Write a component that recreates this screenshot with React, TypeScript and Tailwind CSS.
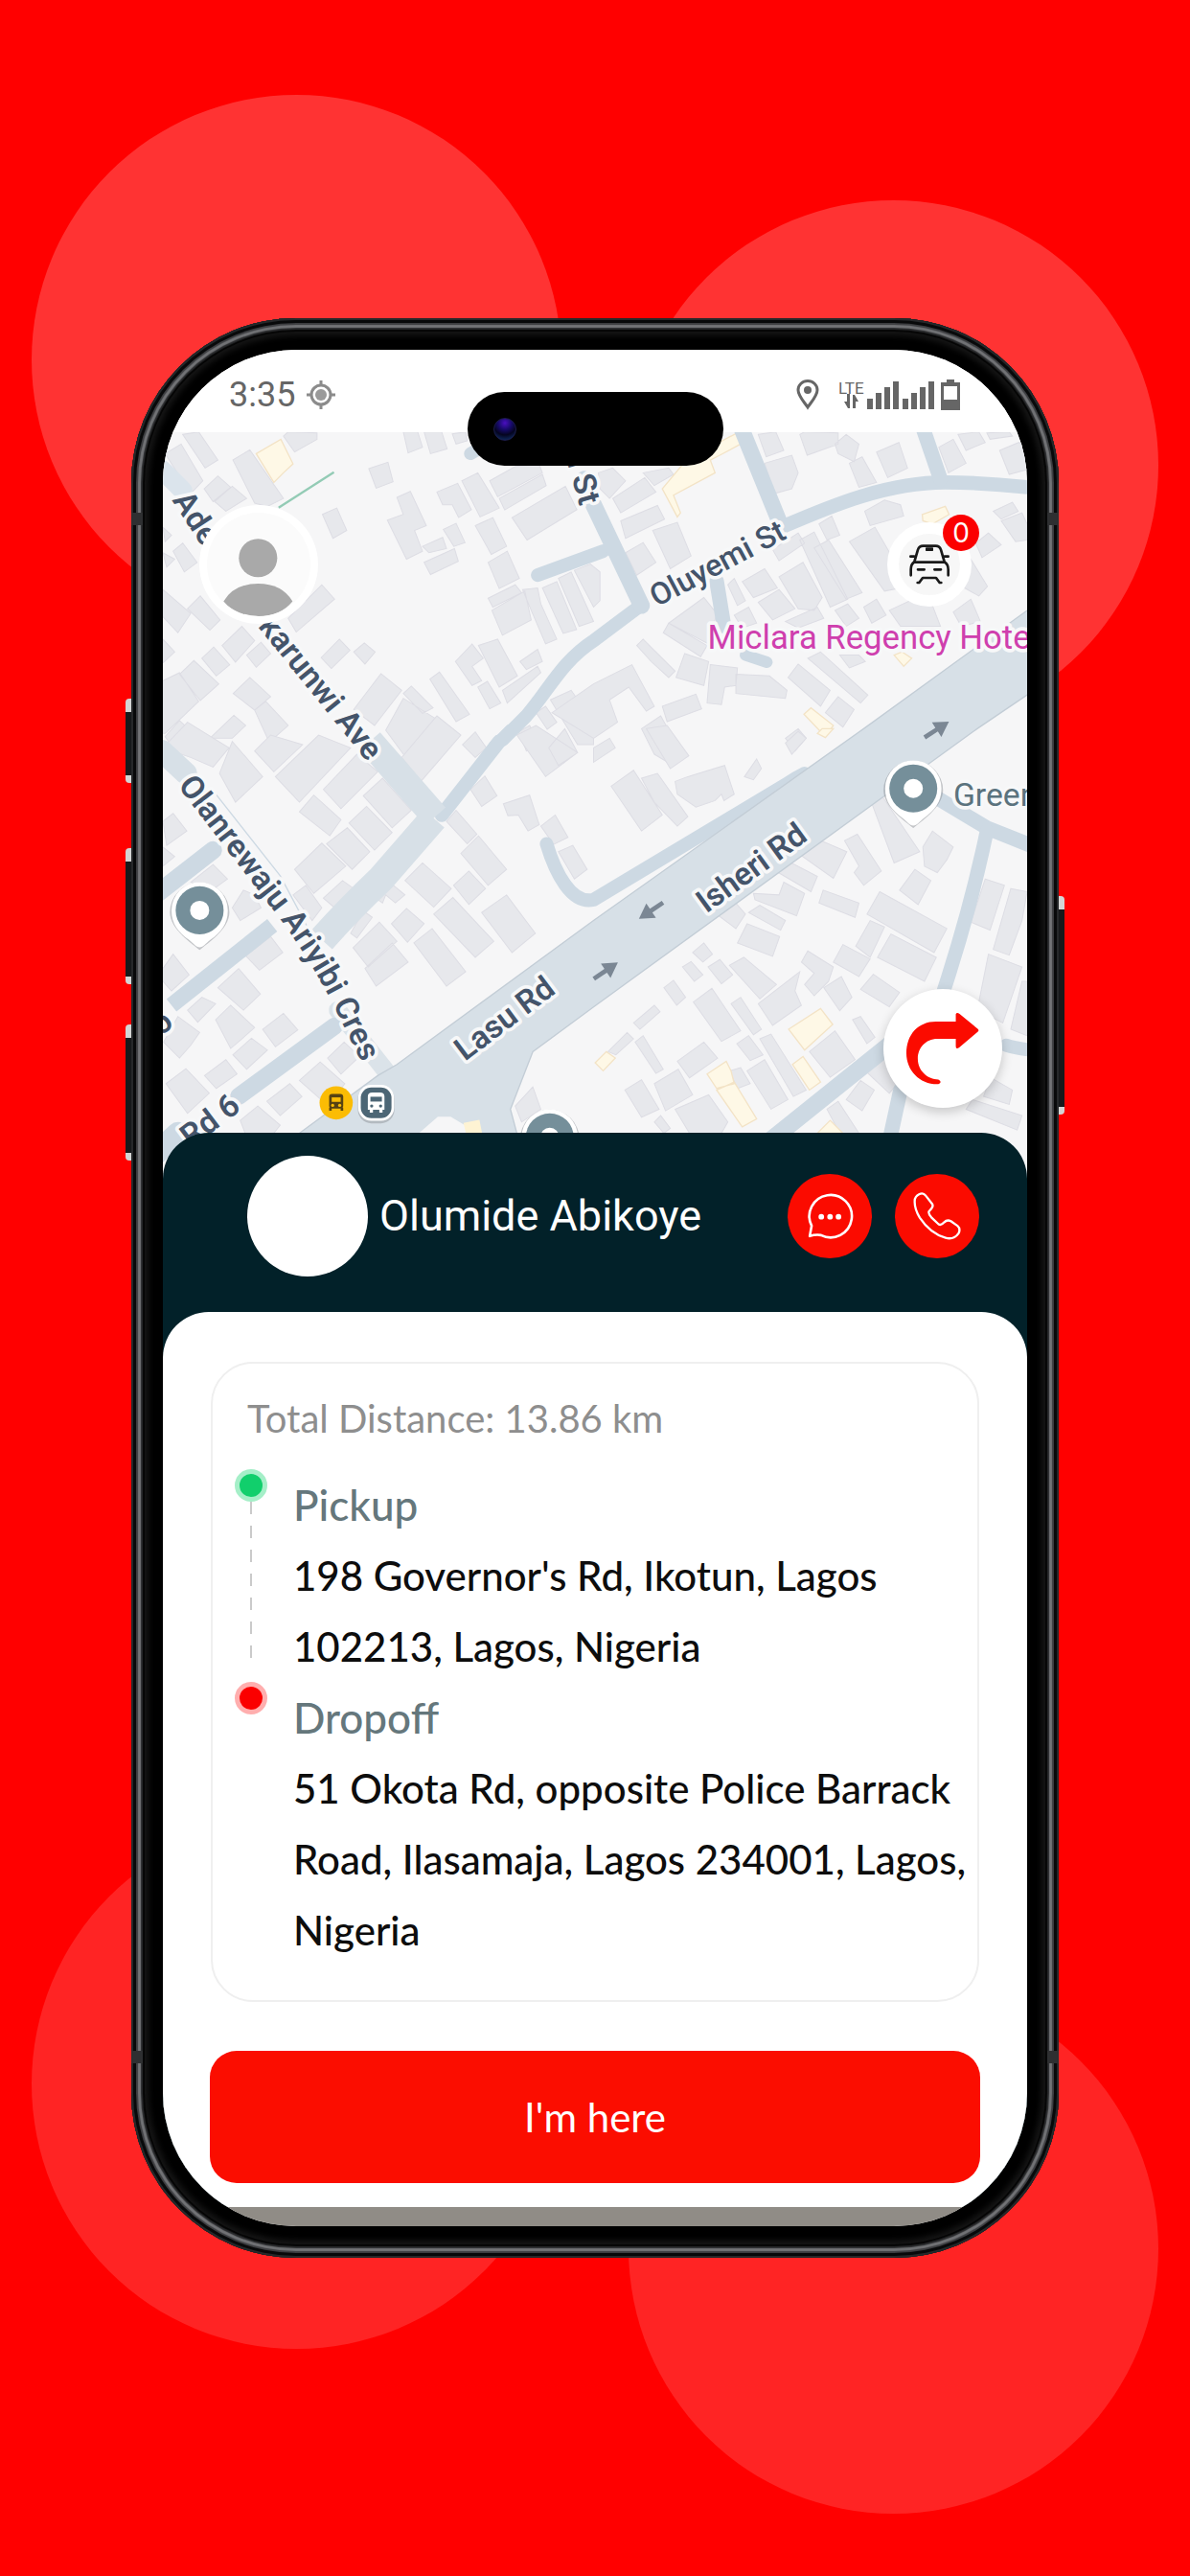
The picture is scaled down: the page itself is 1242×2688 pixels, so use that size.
import React from "react";
import clsx from "clsx";

// Each map quadrant keeps its own local grid, shifted into the shared 2703 x 2340 canvas.
const quadrants = [
  {
    id: "north-west",
    transform: "translate(-153 -393)",
    buildings:
      "M160 460L210 430L278 545L240 585ZM215 400L265 392L325 480L285 505ZM372 480L425 448L530 600L480 625L440 615ZM530 405L545 392L635 395L635 415L565 455ZM905 392L950 392L965 440L920 458ZM970 392L1025 392L1042 445L990 460ZM1058 398L1100 392L1105 420L1070 430ZM797 507L857 487L873 548L820 568ZM282 570L325 530L365 565L310 610ZM315 610L370 562L415 600L350 640ZM652 650L697 630L728 700L685 725ZM885 597L927 578L977 685L940 700L965 765L915 790L855 668L905 650ZM965 750L1028 722L1040 757L985 770ZM970 800L1065 757L1077 797L990 838ZM1030 697L1070 678L1098 738L1063 750ZM1010 580L1075 553L1118 635L1078 660L1058 620L1028 620ZM1088 545L1138 520L1205 630L1145 658ZM1175 545L1255 500L1330 495L1340 520L1200 595ZM1205 600L1340 525L1352 560L1222 636ZM1245 660L1412 562L1448 635L1292 730ZM1130 685L1185 660L1228 750L1180 775ZM1170 800L1230 765L1268 850L1205 882ZM1170 912L1255 870L1275 895L1185 940ZM1182 950L1285 890L1305 980L1215 1028ZM1278 885L1325 880L1335 930L1385 1040L1350 1055L1305 950ZM1340 880L1385 860L1447 1010L1405 1022ZM1390 850L1430 830L1500 985L1455 1000ZM1440 825L1490 805L1520 830L1520 920L1500 940ZM1068 1110L1120 1055L1155 1100L1120 1125L1150 1170L1120 1185ZM1140 1060L1200 1040L1262 1155L1205 1190ZM1270 1110L1325 1072L1340 1110L1290 1135ZM1215 1200L1325 1125L1335 1145L1230 1240ZM1138 1190L1168 1172L1210 1240L1175 1258ZM988 1165L1018 1143L1112 1275L1070 1298ZM750 1260L835 1148L900 1200L815 1310ZM905 1210L930 1187L998 1255L965 1272ZM850 1325L905 1225L1000 1285L1070 1330L1010 1400L920 1420ZM648 1098L705 1040L738 1075L680 1132ZM750 1080L783 1052L817 1080L785 1118ZM545 975L650 870L690 915L570 1018ZM415 1090L460 1050L490 1085L445 1128ZM338 1060L400 1000L440 1045L380 1112ZM275 1100L312 1065L362 1120L320 1155ZM205 1150L250 1107L328 1180L270 1232ZM153 1170L205 1145L265 1235L160 1335L153 1335ZM373 1210L425 1160L490 1220L440 1262ZM440 1262L475 1235L545 1310L500 1350L480 1350ZM153 885L240 960L200 1020L153 970ZM230 945L270 905L332 980L300 1012ZM185 765L215 740L260 800L220 830ZM153 690L180 715L160 735ZM153 770L190 790L165 815ZM153 1040L190 1080L153 1115ZM300 1350L375 1278L412 1310L370 1350ZM160 1345L205 1295L265 1350L200 1400ZM1365 1230L1430 1200L1500 1300L1500 1370L1450 1370ZM1265 1330L1300 1310L1335 1370L1290 1390ZM1320 1270L1350 1250L1385 1300L1355 1322Z",
    accents: "M445 460L522 415L560 492L530 520L500 550Z",
  },
  {
    id: "north-east",
    transform: "translate(1347 -393)",
    buildings:
      "M15 520L60 505L100 545L50 600L20 570ZM60 600L160 535L195 580L85 645ZM85 670L200 622L222 665L100 725ZM155 520L235 505L250 525L190 560ZM100 770L155 738L195 800L135 840ZM185 700L262 675L305 780L240 820ZM515 400L570 392L595 450L540 470ZM645 400L660 392L765 395L765 430L668 465ZM535 490L620 465L640 520L620 570L565 585ZM755 430L790 400L830 430L815 485L765 460ZM800 490L840 470L885 550L830 565ZM885 455L955 425L982 505L920 535ZM1080 440L1125 415L1165 490L1110 520ZM1140 400L1205 392L1225 425L1165 450ZM1270 450L1330 425L1356 440L1356 510L1300 525ZM1230 395L1300 392L1310 405L1240 415ZM848 640L910 605L960 620L970 655L865 685ZM705 680L745 655L770 715L730 730ZM1250 640L1310 612L1328 640L1275 665ZM1275 670L1340 645L1356 680L1356 730L1320 735ZM1195 740L1235 708L1275 745L1215 785ZM560 760L640 708L660 740L580 795ZM645 730L690 705L795 915L740 940ZM690 755L735 730L840 895L790 915ZM800 735L880 690L955 820L960 880L910 890ZM580 845L655 800L715 910L690 950L640 945ZM465 860L535 820L575 880L500 910ZM515 925L580 885L630 945L560 980ZM420 870L440 850L475 920L450 935ZM440 965L485 940L510 990L465 1005ZM600 985L700 940L720 975L640 1005ZM755 950L795 930L830 975L790 1000ZM845 940L885 915L915 965L870 990ZM925 950L990 920L1060 935L1085 1000L960 1000ZM1125 955L1180 915L1210 985L1150 1000ZM1180 790L1232 875L1205 905L1160 880ZM235 990L345 910L385 960L360 1055ZM218 1020L235 990L355 1060L335 1095ZM135 1060L155 1040L255 1140L235 1160L180 1110ZM285 1085L360 1110L345 1185L258 1160ZM365 1120L450 1130L445 1185L410 1190L400 1245L355 1240ZM445 1150L550 1155L605 1200L600 1225L445 1210ZM0 1180L120 1120L190 1250L165 1265L110 1190L50 1230L75 1300L0 1350L-130 1270ZM215 1250L320 1212L338 1258L230 1298ZM150 1320L210 1280L260 1370L240 1430L190 1400ZM608 1160L640 1118L740 1200L710 1250ZM670 1100L710 1080L858 1215L835 1240ZM725 1270L765 1220L815 1260L780 1315ZM770 1090L830 1090L850 1110L800 1130ZM600 1350L640 1320L665 1350L630 1390Z",
    accents:
      "M290 480L455 392L460 430L395 465L365 480L380 520L250 590L272 645L262 658L215 570ZM1028 650L1100 625L1112 650L1060 680L1030 670ZM940 1090L965 1080L995 1100L970 1125ZM658 1275L680 1255L750 1310L725 1345Z",
  },
  {
    id: "south-west",
    transform: "translate(-153 927)",
    buildings:
      "M505 150L640 20L740 60L580 230ZM655 190L760 80L825 135L710 250ZM780 210L840 155L930 255L870 310ZM580 260L625 208L710 285L675 335ZM735 295L790 243L870 325L815 380ZM665 360L730 310L800 385L745 440ZM565 440L650 358L725 430L625 515ZM330 140L370 40L465 150L380 230ZM153 60L230 -20L360 60L310 120L240 90ZM440 70L490 20L590 50L500 135ZM1115 190L1160 148L1198 210L1150 243ZM1218 235L1300 208L1330 300L1295 320L1265 270L1232 272ZM1335 305L1380 270L1420 340L1375 362ZM1390 385L1435 365L1480 440L1440 470ZM1040 290L1070 255L1135 330L1105 360ZM1085 390L1140 335L1228 440L1170 490ZM1260 20L1320 -10L1450 75L1350 150ZM1360 60L1410 0L1450 75L1390 115ZM910 475L965 420L1055 500L1000 558ZM1062 490L1110 445L1162 500L1110 550ZM1150 575L1228 520L1318 640L1245 700ZM1000 580L1060 528L1188 665L1130 715ZM868 610L915 562L970 610L918 668ZM938 670L995 625L1100 760L1040 805ZM748 685L830 605L885 665L795 745ZM785 750L870 670L920 730L820 805ZM740 640L780 570L808 590L760 655ZM655 530L715 475L750 500L690 560ZM560 520L600 490L650 560L620 600ZM805 520L850 470L910 520L880 545L850 520L840 545ZM370 560L405 505L440 520L460 560L395 600ZM412 710L490 650L528 700L455 755ZM325 810L390 750L458 830L405 880ZM153 750L185 705L235 770L180 820L153 790ZM153 290L185 265L228 320L165 365ZM153 370L190 400L153 430ZM230 880L275 840L318 860L262 918ZM318 910L365 865L440 935L400 970L365 1000ZM465 940L530 890L575 942L505 995ZM372 1020L430 968L480 1005L415 1065ZM155 980L200 900L268 950L240 990L205 1030ZM283 1085L350 1035L385 1080L320 1125ZM163 1110L225 1063L298 1140L230 1203ZM478 1165L550 1110L588 1150L520 1210ZM580 1100L645 1042L722 1110L670 1180ZM668 1030L720 980L768 1025L710 1080ZM395 1225L450 1180L520 1240L480 1290L420 1290ZM1255 1180L1310 1120L1335 1190L1275 1230ZM240 480L310 425L355 470L300 510ZM900 90L1010 -40L1085 20L960 165ZM1090 50L1130 10L1165 60L1130 90Z",
    accents: "",
  },
  {
    id: "south-east",
    transform: "translate(1347 927)",
    buildings:
      "M55 180L125 130L215 270L150 320ZM150 155L200 140L295 275L262 305L190 230ZM255 165L295 150L410 115L440 205L408 225L400 205L380 225L320 245L262 205ZM472 150L510 95L525 125L500 160ZM0 60L50 30L68 60L0 105ZM165 0L230 -10L298 85L240 125ZM600 45L640 8L665 30L620 80ZM865 220L905 215L1020 385L940 420ZM640 390L700 345L792 385L750 468ZM578 450L610 415L700 462L680 510ZM785 350L825 330L900 445L845 490L815 450L830 430ZM500 515L580 520L595 480L660 515L635 585L505 535ZM485 575L520 552L600 600L585 630ZM385 580L440 540L475 580L445 625ZM450 670L480 610L582 650L560 712ZM705 545L718 505L830 545L818 590ZM957 505L1005 440L1055 475L1015 550ZM1030 370L1060 320L1125 370L1105 410L1075 450L1035 430ZM855 580L895 510L1105 625L1065 700ZM820 680L865 600L910 620L865 715ZM888 715L930 642L1072 715L1035 790ZM750 730L780 675L865 720L830 775ZM310 700L345 670L372 705L342 730ZM278 745L305 728L342 770L315 790ZM358 745L395 722L435 770L400 798ZM425 740L470 715L572 800L520 845ZM650 730L670 695L750 745L735 790L690 835L660 800L690 765ZM720 810L775 775L808 840L770 882ZM835 815L875 768L957 825L925 870ZM220 810L250 787L288 840L260 865ZM312 855L370 812L460 945L400 978ZM430 860L460 840L525 940L500 957ZM515 860L645 760L630 820L650 865L560 928ZM125 920L190 865L208 885L145 940ZM45 1010L105 950L125 970L70 1020ZM130 980L155 960L218 1065L195 1078ZM262 1040L345 980L388 1030L300 1092ZM448 985L485 960L530 1020L490 1038ZM520 970L555 955L665 1130L625 1150ZM480 1070L535 1035L608 1160L555 1190ZM675 1010L755 945L818 1035L740 1090ZM810 910L835 900L880 965L855 985ZM98 1130L150 1098L205 1190L150 1215ZM190 1110L265 1065L310 1145L225 1195ZM255 1190L360 1145L420 1230L400 1265L300 1265ZM425 1070L460 1060L490 1110L450 1125ZM790 1160L835 1100L878 1130L840 1195ZM730 1190L765 1165L830 1265L770 1265ZM850 1070L900 1010L950 1110L925 1140ZM1225 470L1285 490L1240 630L1180 605ZM1305 500L1356 510L1340 600L1300 708L1250 690ZM1235 705L1340 745L1280 920L1200 880ZM1340 790L1356 790L1356 960L1305 940ZM1240 1090L1310 1130L1300 1175L1220 1150ZM1165 1190L1185 1160L1340 1210L1325 1255ZM190 1230L210 1210L240 1250L220 1265Z",
    accents:
      "M610 940L710 875L748 925L660 1005ZM622 1050L655 1025L710 1105L675 1130ZM355 1080L415 1040L430 1070L440 1110L385 1125ZM385 1130L440 1105L510 1220L465 1245ZM5 1045L40 1010L68 1030L30 1070ZM700 1265L740 1225L780 1265ZM700 15L715 0L750 0L725 28Z",
  },
];

const haloText = "[paint-order:stroke] stroke-[#f7f8f9] stroke-[22px] [stroke-linejoin:round]";
const streetLabel = "fill-[#44546a] font-semibold text-[100px]";

const MapPin = ({ x, y }: { x: number; y: number }) => (
  <g transform={`translate(${x} ${y})`}>
    <path d="M0 124C-20 106 -93 60 -93 6A93 93 0 1 1 93 6C93 60 20 106 0 124Z" fill="#8f9499" opacity="0.5" />
    <path d="M0 116C-12 116 -18 104 -34 92C-66 68 -88 44 -88 0A88 88 0 1 1 88 0C88 44 66 68 34 92C18 104 12 116 0 116Z" fill="#fff" />
    <circle r="75" fill="#758f9a" />
    <circle r="30" fill="#fff" />
  </g>
);

const LaneArrow = ({ x, y, angle }: { x: number; y: number; angle: number }) => (
  <path
    transform={`translate(${x} ${y}) rotate(${angle})`}
    d="M-45 -7H0V-27L46 0L0 27V7H-45Z"
    fill="#7b8794"
  />
);

const StreetMap = () => (
  <svg
    viewBox="0 0 2703 2340"
    preserveAspectRatio="xMidYMin slice"
    className="block h-[780px] w-full bg-[#f6f6f7]"
    role="img"
    aria-label="Map around Isheri Rd and Lasu Rd"
  >
    <g stroke="#dddde4" strokeWidth="3" fill="#e7e8ec">
      {quadrants.map((q) => (
        <path key={q.id} d={q.buildings} transform={q.transform} />
      ))}
    </g>
    <g stroke="#f3e3c6" strokeWidth="4" fill="#fef8e6">
      {quadrants.map((q) => (
        <path key={q.id} d={q.accents} transform={q.transform} />
      ))}
    </g>

    {/* side streets */}
    <g fill="none" stroke="#cdd9e3" strokeLinejoin="round" strokeLinecap="round">
      <g transform="translate(-153 -393)">
        <path d="M1325 840L1530 765" strokeWidth="42" />
        <path d="M1115 460L1150 440" strokeWidth="40" />
        <path d="M150 510L215 575" strokeWidth="60" stroke="#dbe4ec" />
        <path d="M1640 940L1500 1045C1400 1110 1360 1200 1290 1280L1215 1355" strokeWidth="42" />
      </g>
      <g transform="translate(1347 -393)">
        <path d="M-30 540L0 620L150 935" strokeWidth="52" />
        <path d="M462 380L588 690" strokeWidth="50" />
        <path d="M588 690C750 620 920 550 1100 550Q1230 550 1380 568" strokeWidth="44" />
        <path d="M1030 380L1085 540" strokeWidth="46" />
        <path d="M385 860L408 1000" strokeWidth="46" />
        <path d="M475 1090L542 1112" strokeWidth="36" />
      </g>
      <g transform="translate(-153 927)">
        <path d="M1235 0L1185 50" strokeWidth="24" />
        <path d="M1205 40L1025 270" strokeWidth="44" />
        <path d="M800 40L1005 275" strokeWidth="86" stroke="#d7e0e7" strokeLinecap="butt" />
        <path d="M1000 280L835 470Q740 560 650 660" strokeWidth="88" stroke="#d7e0e7" strokeLinecap="butt" />
        <path d="M150 70L225 140" strokeWidth="70" stroke="#d7e0e7" />
        <path d="M315 200L520 460L690 780" strokeWidth="4" />
        <path d="M700 880L850 1070" strokeWidth="56" stroke="#dbe3e9" />
        <path d="M310 380L130 520" strokeWidth="56" />
        <path d="M495 615L180 865" strokeWidth="50" strokeLinecap="butt" />
        <path d="M690 930L390 1150" strokeWidth="54" />
        <path d="M200 1265L130 1330" strokeWidth="70" />
        <path d="M1353 360C1380 450 1430 550 1500 535L2100 175Q2130 155 2160 140" strokeWidth="42" />
      </g>
      <g transform="translate(1347 927)">
        <path d="M1080 220L1230 310L1380 370" strokeWidth="46" />
        <path d="M1230 320Q1180 560 1095 820" strokeWidth="44" />
        <path d="M960 1130L925 1290" strokeWidth="46" />
        <path d="M930 985L550 1290" strokeWidth="54" />
        <path d="M1290 990Q1320 1000 1370 1005" strokeWidth="42" />
      </g>
    </g>

    {/* Isheri Rd / Lasu Rd carriageway */}
    <path
      d="M2720 545L2192 927L1347 1527L732 1977L672 2012L427 2192L250 2340H1200L1107 2192L1087 2117L1157 1937L1347 1797L2547 927L2720 810Z"
      fill="#d7e0e7"
      stroke="#c3cdd6"
      strokeWidth="4"
    />
    <path d="M780 2210L860 2140L900 2140L1000 2200L960 2260H780Z" fill="#f6f6f7" />
    <path d="M940 2160L990 2150L1000 2200L950 2200Z" fill="#fef3d3" />
    <path d="M362 236L535 125" stroke="#93cbb5" strokeWidth="7" />

    <LaneArrow x={2420} y={930} angle={-33} />
    <LaneArrow x={1527} y={1496} angle={146} />
    <LaneArrow x={1385} y={1684} angle={-34} />

    <g className={`font-['Roboto',sans-serif] ${haloText}`}>
      <text className={streetLabel} transform="translate(28 212) rotate(57)">Ade</text>
      <text className={streetLabel} transform="translate(640 1032) rotate(51)" textAnchor="end">
        karunwi Ave
      </text>
      <text className={streetLabel} transform="translate(1304 232) rotate(74)" textAnchor="end">i St</text>
      <text className="fill-[#44546a] text-[96px] font-medium" transform="translate(1545 548) rotate(-28)">Oluyemi St</text>
      <text className={streetLabel} transform="translate(1700 1506) rotate(-36)">Isheri Rd</text>
      <text className={streetLabel} transform="translate(945 1968) rotate(-37)">Lasu Rd</text>
      <path id="crescent" d="M45 1105L350 1500Q470 1660 545 1815L670 2070" fill="none" stroke="none" />
      <text className={streetLabel}>
        <textPath href="#crescent">Olanrewaju Ariyibi Cres</textPath>
      </text>
      <text className={streetLabel} transform="translate(248 2118) rotate(-37)" textAnchor="end">Rd 6</text>
      <text className={streetLabel} transform="translate(38 1855) rotate(-37)" textAnchor="end">o</text>
      <text x="1704" y="678" className="fill-[#cf3fae] text-[104px]">Miclara Regency Hotel</text>
      <text x="2472" y="1168" className="fill-[#5b737e] text-[101px]">Green</text>
    </g>

    <MapPin x={115} y={1495} />
    <MapPin x={2347} y={1114} />
    <MapPin x={1210} y={2205} />

    <g transform="translate(542 2097)">
      <circle r="52" fill="#fbbc04" />
      <rect x="-22" y="-28" width="44" height="46" rx="9" fill="#564213" />
      <rect x="-14" y="-17" width="28" height="14" fill="#fbbc04" />
      <circle cx="-11" cy="8" r="5" fill="#fbbc04" />
      <circle cx="11" cy="8" r="5" fill="#fbbc04" />
      <path d="M-18 15v10M18 15v10" stroke="#564213" strokeWidth="8" />
    </g>
    <g transform="translate(667 2097)">
      <rect x="-57" y="-54" width="114" height="118" rx="42" fill="#8f9499" opacity="0.5" />
      <rect x="-56" y="-56" width="112" height="112" rx="40" fill="#fff" />
      <rect x="-48" y="-48" width="96" height="96" rx="33" fill="#4c6675" />
      <path d="M-26 -20Q-26 -32 -12 -32H12Q26 -32 26 -20V22H20V31H10V22H-10V31H-20V22H-26Z" fill="#fff" />
      <rect x="-18" y="-19" width="36" height="15" fill="#4c6675" />
      <circle cx="-14" cy="10" r="5" fill="#4c6675" />
      <circle cx="14" cy="10" r="5" fill="#4c6675" />
    </g>
  </svg>
);

const StatusBar = () => (
  <div className="flex h-[86px] items-center justify-between bg-white px-[69px] pt-2 text-[#666]">
    <div className="flex items-center gap-3">
      <span className="font-['Roboto',sans-serif] text-[36px] leading-10">3:35</span>
      <svg width="30" height="30" viewBox="0 0 30 30" fill="none" stroke="#8b8b8b" strokeWidth="3">
        <circle cx="15" cy="15" r="10" />
        <circle cx="15" cy="15" r="6" fill="#9a9a9a" stroke="none" />
        <path d="M15 0v5M15 25v5M0 15h5M25 15h5" />
      </svg>
    </div>
    <div className="flex items-center gap-5">
      <svg width="24" height="32" viewBox="0 0 24 32" fill="none" stroke="#666" strokeWidth="3">
        <path d="M12 29C8 23 2 17 2 11a10 9.5 0 0 1 20 0C22 17 16 23 12 29Z" />
        <circle cx="12" cy="11" r="4" fill="#666" stroke="none" />
      </svg>
      <svg width="128" height="32" viewBox="0 0 128 32" fill="#666">
        <text x="0" y="15" className="font-['Roboto',sans-serif] text-[17px]">LTE</text>
        <path d="M9 15h3v15h-2l-4 -7h3ZM15 30V16h2l4 7h-3v7Z" />
        <path d="M30 20h6v11h-6ZM39 14h6v17h-6ZM48 8h6v23h-6ZM57 2h6v29h-6Z" />
        <path d="M67 20h6v11h-6ZM76 14h6v17h-6ZM85 8h6v23h-6ZM94 2h6v29h-6Z" />
        <path d="M113 0h8v3h6v29h-20V3h6ZM110 7v14h14V7Z" fillRule="evenodd" />
      </svg>
    </div>
  </div>
);

const CarIcon = () => (
  <svg width="44" height="44" viewBox="984 742 132 132" fill="none" stroke="#1a1a1a" strokeWidth="8" strokeLinecap="round" strokeLinejoin="round">
    <path d="M1004 796L1014 762Q1018 750 1030 750H1070Q1082 750 1086 762L1096 796" />
    <path d="M1002 801H1098M991 783H1002M1098 783H1109" />
    <path d="M992 842V824Q992 808 1002 801M1109 842V824Q1109 808 1098 801" />
    <path d="M1014 824H1034M1066 824H1086" />
    <path d="M1013 865H1018L1029 850H1071L1082 865H1087" />
    <path d="M1040 757H1060V764H1040Z" strokeWidth="4" fill="#1a1a1a" />
  </svg>
);

const MapSection = () => (
  <section className="relative">
    <StreetMap />
    <div className="absolute inset-0 flex flex-col justify-between pb-[75px] pl-[38px] pr-[26px] pt-[76px]">
      <div className="flex items-center justify-between pr-8">
        <button aria-label="Profile" className="size-[124px] rounded-full bg-white p-2">
          <svg viewBox="24 24 318 318" className="size-full rounded-full bg-[#fbfbfb]" fill="#a9a9a9">
            <circle cx="181" cy="163" r="59" />
            <path d="M75 296Q108 242 181 242Q254 242 287 296Q250 342 181 342Q112 342 75 296Z" />
          </svg>
        </button>
        <button aria-label="Rides" className="relative flex size-[88px] items-center justify-center rounded-full border-[12px] border-white bg-[#f7f7f7]">
          <CarIcon />
          <span className="absolute -right-5 -top-5 flex size-[38px] items-center justify-center rounded-full bg-[#fb0000] font-['Inter',sans-serif] text-[28px] text-white">
            0
          </span>
        </button>
      </div>
      <button aria-label="Navigate" className="flex size-[124px] items-center justify-center self-end rounded-full bg-white shadow-[0_4px_12px_rgba(0,0,0,0.2)]">
        <svg width="78" height="78" viewBox="974 882 236 236" fill="#fb0b00">
          <path d="M1133 892Q1136 884 1145 891L1202 938Q1208 943 1202 948L1144 997Q1133 1004 1133 993V970H1075C1037 970 1013 1000 1013 1032C1013 1072 1045 1098 1078 1098Q1092 1106 1078 1113C1020 1115 977 1070 977 1015C977 955 1015 915 1070 915H1133Z" />
        </svg>
      </button>
    </div>
  </section>
);

const RiderHeader = () => (
  <div className="flex items-center pb-[37px] pl-[88px] pr-[50px] pt-6">
    <div className="size-[126px] shrink-0 rounded-full bg-white" />
    <p className="ml-3 flex-1 font-['Roboto',sans-serif] text-[45px] leading-[60px] text-white">Olumide Abikoye</p>
    <div className="flex gap-6">
      <button aria-label="Message" className="size-[88px] rounded-full bg-[#fb0b00]">
        <svg viewBox="30 28 270 270" fill="none" stroke="#fff" strokeWidth="8" strokeLinejoin="round">
          <path d="M101 227L107 194A68 68 0 1 1 137 224Q120 221 101 227Z" />
          <g fill="#fff" stroke="none">
            <circle cx="138" cy="165" r="9" />
            <circle cx="166" cy="165" r="9" />
            <circle cx="193" cy="165" r="9" />
          </g>
        </svg>
      </button>
      <button aria-label="Call" className="size-[88px] rounded-full bg-[#fb0b00]">
        <svg viewBox="368 28 268 268" fill="none" stroke="#fff" strokeWidth="7" strokeLinejoin="round">
          <path d="M431 115Q430 100 446 92Q458 86 466 97L487 124Q492 133 477 146Q472 152 484 166L507 188Q515 193 524 182Q534 172 546 178L567 193Q578 203 570 217Q555 238 529 231Q480 217 447 167Q430 138 431 115Z" />
        </svg>
      </button>
    </div>
  </div>
);

const stops = [
  {
    id: "pickup",
    label: "Pickup",
    lines: ["198 Governor's Rd, Ikotun, Lagos", "102213, Lagos, Nigeria"],
    dot: "bg-[#11cf6c] border-[#a5efc8]",
  },
  {
    id: "dropoff",
    label: "Dropoff",
    lines: ["51 Okota Rd, opposite Police Barrack", "Road, Ilasamaja, Lagos 234001, Lagos,", "Nigeria"],
    dot: "bg-[#fb0000] border-[#ffaeae]",
  },
];

const TripCard = () => (
  <div className="mx-[50px] mt-[51px] rounded-[44px] border-2 border-[#efefef] pb-9 pt-5">
    <p className="mb-4 pl-9 text-[40px] leading-[74px] text-[#8e8e8e]">Total Distance: 13.86 km</p>
    {stops.map((stop, i) => (
      <div key={stop.id} className="flex gap-7 pl-6">
        <div className="flex w-8 shrink-0 flex-col items-center pb-5">
          <div className={clsx("size-[34px] shrink-0 rounded-full border-[5px]", stop.dot)} />
          {i < stops.length - 1 && (
            <div className="w-0.5 flex-1 bg-[repeating-linear-gradient(to_bottom,#cacaca_0_13px,transparent_13px_25px)]" />
          )}
        </div>
        <div className="whitespace-nowrap">
          <h2 className="text-[44px] font-medium leading-[74px] text-[#65777c]">{stop.label}</h2>
          {stop.lines.map((line) => (
            <p key={line} className="text-[42px] font-medium leading-[74px] text-[#0d0d0d]">{line}</p>
          ))}
        </div>
      </div>
    ))}
  </div>
);

const SideKey = ({ className }: { className: string }) => (
  <div className={clsx("w-full border-t-[14px] border-b-8 border-[#d4d4d4] bg-[#17191b]", className)} />
);

const AntennaBands = () => (
  <div className="flex justify-between">
    <div className="h-[13px] w-3 bg-[#2e2f31]" />
    <div className="h-[13px] w-3 bg-[#2e2f31]" />
  </div>
);

const Backdrop = () => (
  <div className="absolute inset-0 flex flex-col justify-between px-[33px] pb-[65px] pt-[99px]">
    <div className="flex items-start justify-between">
      <div className="size-[553px] rounded-full bg-[#ff3333]" />
      <div className="mt-[110px] size-[553px] rounded-full bg-[#ff3333]" />
    </div>
    <div className="flex items-start justify-between">
      <div className="size-[553px] rounded-full bg-[#ff2424]" />
      <div className="mt-[172px] size-[553px] rounded-full bg-[#ff2424]" />
    </div>
  </div>
);

const App = () => (
  <main className="relative flex min-h-screen items-center justify-center overflow-hidden bg-[#ff0000] px-[131px] py-24 font-['Lato','Roboto',sans-serif]">
    <Backdrop />

    <div className="relative flex w-full max-w-[980px]">
      <div className="flex w-1.5 flex-col pt-[397px]">
        <SideKey className="h-[88px] rounded-l-sm" />
        <SideKey className="mt-[68px] h-[142px] rounded-l-sm" />
        <SideKey className="mt-[42px] h-[142px] rounded-l-sm" />
      </div>

      <div className="relative min-w-0 flex-1 rounded-[172px] bg-black p-[33px] shadow-[inset_0_0_0_2px_#26282a,inset_0_0_0_5px_#08090a,inset_0_0_1px_7px_#3c3d40,inset_0_0_1px_10px_#737477,inset_0_0_1px_12px_#2a2b2d,inset_0_0_0_14px_#050505,inset_0_0_6px_18px_#161616]">
        <div className="absolute inset-0 flex flex-col justify-between py-[203px]">
          <AntennaBands />
          <AntennaBands />
        </div>

        <div className="relative overflow-hidden rounded-[139px] bg-white">
          <StatusBar />
          <MapSection />
          <div className="relative -mt-[49px] rounded-t-[48px] bg-[#022129]">
            <RiderHeader />
            <div className="flex flex-col rounded-t-[48px] bg-white pt-px">
              <TripCard />
              <button className="mx-[49px] mb-[25px] mt-[51px] h-[138px] rounded-[28px] bg-[#fb0d00] text-[42px] text-white">
                I'm here
              </button>
            </div>
          </div>
          <div className="h-5 bg-[#908c86]" />

          <div className="absolute inset-x-0 top-11 flex justify-center">
            <div className="flex h-[77px] w-[267px] items-center rounded-full bg-black pl-[27px]">
              <div className="size-6 rounded-full border border-[#1c1c4a] bg-[radial-gradient(circle_at_50%_20%,#4a0fc0_0%,#150a66_35%,#05051f_60%,#123a7a_100%)]" />
            </div>
          </div>
        </div>
      </div>

      <div className="flex w-1.5 flex-col pt-[603px]">
        <SideKey className="h-[228px] rounded-r-sm" />
      </div>
    </div>
  </main>
);

export default App;
